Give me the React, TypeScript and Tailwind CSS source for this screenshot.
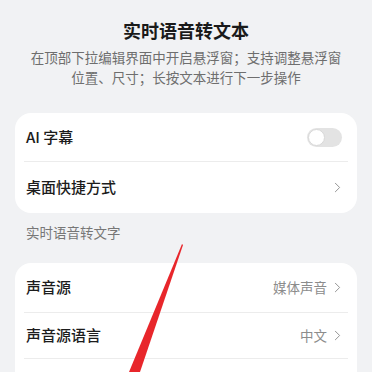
import { ChevronRight } from "lucide-react";

const font = { fontFamily: '"Noto Sans CJK SC", "Noto Sans", sans-serif' };

function Row({
  label,
  value,
  h,
  divider,
  toggle,
}: {
  label?: string;
  value?: string;
  h: string;
  divider?: boolean;
  toggle?: boolean;
}) {
  return (
    <div className={`flex items-center justify-between pl-[2px] pr-[2px] ${h} ${divider ? "border-b border-[#ececec]" : ""}`}>
      <span className="text-[15px] font-medium text-[#1c1c1c]">{label}</span>
      {toggle ? (
        <div className="w-[35px] h-[19px] rounded-full bg-[#e3e3e3] flex items-center px-[1px] mr-[4px]">
          <div className="w-[17px] h-[17px] rounded-full bg-white border border-[#d8d8d8]" />
        </div>
      ) : label ? (
        <div className="flex items-center gap-[2px] text-[#8c8c8c]">
          {value && <span className="text-[13.5px]">{value}</span>}
          <ChevronRight className="w-[17px] h-[17px]" strokeWidth={1.3} />
        </div>
      ) : null}
    </div>
  );
}

export default function App() {
  return (
    <div className="relative w-[372px] h-[372px] overflow-hidden bg-[#f1f2f4]" style={font}>
      <div className="pt-[18px] flex flex-col items-center">
        <h1 className="text-[18px] leading-[24px] font-semibold text-[#1a1a1a]">实时语音转文本</h1>
        <p className="mt-[5px] text-[13.5px] leading-[20px] text-[#6e6e6e] text-center">
          在顶部下拉编辑界面中开启悬浮窗；支持调整悬浮窗
          <br />
          位置、尺寸；长按文本进行下一步操作
        </p>
      </div>

      <div className="mx-[15px] mt-[26px] bg-white rounded-[16px] px-[9px]">
        <Row label="AI 字幕" h="h-[49px]" divider toggle />
        <Row label="桌面快捷方式" h="h-[51px]" />
      </div>

      <div className="mt-[9px] pl-[26px] text-[13.5px] leading-[20px] text-[#777]">实时语音转文字</div>

      <div className="mx-[15px] mt-[21px] bg-white rounded-[16px] px-[9px]">
        <Row label="声音源" value="媒体声音" h="h-[50px]" divider />
        <Row label="声音源语言" value="中文" h="h-[46px]" divider />
        <Row h="h-[48px]" />
      </div>

      <svg className="absolute inset-0 pointer-events-none" width="372" height="372" viewBox="0 0 372 372">
        <polygon points="182,244 183,245 140,372 129,372" fill="#e8262b" />
      </svg>
    </div>
  );
}
